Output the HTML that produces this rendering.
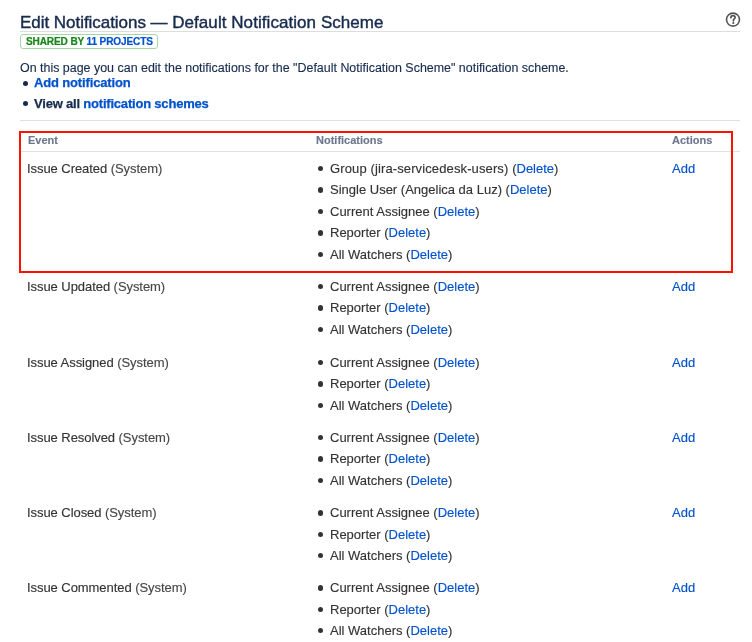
<!DOCTYPE html>
<html><head><meta charset="utf-8"><style>
html,body{margin:0;padding:0;background:#fff;width:752px;height:642px;overflow:hidden;position:relative}
body{font-family:'Liberation Sans', sans-serif}
.t{position:absolute;white-space:nowrap;-webkit-text-stroke:0.14px currentColor;will-change:transform}
.r{position:absolute;box-sizing:content-box}
</style></head><body>
<div class="t" style="left:20.30px;top:14.11px;font-size:17px;line-height:17px;color:#172B4D;-webkit-text-stroke:0.42px #172B4D;"><span style="letter-spacing:-0.04px">Edit Notifications — </span><span style="letter-spacing:0.06px">Default Notification Scheme</span></div>
<div class="r" style="left:20px;top:31px;width:720px;height:1px;background:#dddddd;"></div>
<svg class="r" style="left:724px;top:11px" width="18" height="18" viewBox="0 0 18 18"><circle cx="9" cy="8.6" r="6.5" fill="none" stroke="#555" stroke-width="1.6"/><path d="M6.9 6.7 C6.9 5.4 7.9 4.7 9 4.7 C10.2 4.7 11.1 5.5 11.1 6.5 C11.1 7.8 9.4 8 9.4 9.3 L9.4 9.8" fill="none" stroke="#555" stroke-width="1.7" stroke-linecap="round"/><circle cx="9.3" cy="12.0" r="1.1" fill="#555"/></svg>
<div class="r" style="left:20px;top:34px;width:136px;height:13px;border:1px solid #a9d5a9;border-radius:3px"></div>
<div class="t" style="left:25.50px;top:36.85px;font-size:10.1px;line-height:10.1px;color:#0052CC;font-weight:bold;letter-spacing:-0.15px;-webkit-text-stroke:0.2px currentColor;"><span style="color:#188518">SHARED BY</span> 11 PROJECTS</div>
<div class="t" style="left:19.60px;top:61.66px;font-size:12.45px;line-height:12.45px;color:#172B4D;">On this page you can edit the notifications for the "Default Notification Scheme" notification scheme.</div>
<div class="r" style="left:22.90px;top:81.00px;width:5px;height:5px;border-radius:50%;background:#172B4D"></div>
<div class="t" style="left:34.00px;top:75.70px;font-size:13px;line-height:13px;color:#0052CC;font-weight:bold;letter-spacing:-0.15px;-webkit-text-stroke:0.25px currentColor;">Add notification</div>
<div class="r" style="left:22.90px;top:101.00px;width:5px;height:5px;border-radius:50%;background:#172B4D"></div>
<div class="t" style="left:34.00px;top:97.00px;font-size:13px;line-height:13px;color:#172B4D;font-weight:bold;letter-spacing:-0.2px;-webkit-text-stroke:0.25px currentColor;">View all <span style="color:#0052CC">notification schemes</span></div>
<div class="r" style="left:20px;top:120px;width:720px;height:1px;background:#dfe1e6;"></div>
<div class="t" style="left:27.50px;top:134.89px;font-size:11px;line-height:11px;color:#6B778C;font-weight:bold;">Event</div>
<div class="t" style="left:315.50px;top:134.89px;font-size:11px;line-height:11px;color:#6B778C;font-weight:bold;">Notifications</div>
<div class="t" style="left:671.50px;top:134.89px;font-size:11px;line-height:11px;color:#6B778C;font-weight:bold;">Actions</div>
<div class="r" style="left:20px;top:151px;width:720px;height:1px;background:#dfe1e6;"></div>
<div class="t" style="left:27.00px;top:162.00px;font-size:13px;line-height:13px;color:#333333;letter-spacing:-0.06px;">Issue Created <span style="color:#474747">(System)</span></div>
<div class="t" style="left:671.50px;top:162.00px;font-size:13px;line-height:13px;color:#0052CC;">Add</div>
<div class="r" style="left:317.90px;top:166.00px;width:5.4px;height:5.4px;border-radius:50%;background:#333333"></div>
<div class="t" style="left:330.00px;top:162.00px;font-size:13px;line-height:13px;color:#333333;"><span style="letter-spacing:0.12px">Group (jira-servicedesk-users) </span>(<span style="color:#0052CC">Delete</span>)</div>
<div class="r" style="left:317.90px;top:187.43px;width:5.4px;height:5.4px;border-radius:50%;background:#333333"></div>
<div class="t" style="left:330.00px;top:183.43px;font-size:13px;line-height:13px;color:#333333;">Single User (Angelica da Luz) (<span style="color:#0052CC">Delete</span>)</div>
<div class="r" style="left:317.90px;top:208.86px;width:5.4px;height:5.4px;border-radius:50%;background:#333333"></div>
<div class="t" style="left:330.00px;top:204.86px;font-size:13px;line-height:13px;color:#333333;">Current Assignee (<span style="color:#0052CC">Delete</span>)</div>
<div class="r" style="left:317.90px;top:230.29px;width:5.4px;height:5.4px;border-radius:50%;background:#333333"></div>
<div class="t" style="left:330.00px;top:226.29px;font-size:13px;line-height:13px;color:#333333;">Reporter (<span style="color:#0052CC">Delete</span>)</div>
<div class="r" style="left:317.90px;top:251.72px;width:5.4px;height:5.4px;border-radius:50%;background:#333333"></div>
<div class="t" style="left:330.00px;top:247.72px;font-size:13px;line-height:13px;color:#333333;">All Watchers (<span style="color:#0052CC">Delete</span>)</div>
<div class="t" style="left:27.00px;top:280.00px;font-size:13px;line-height:13px;color:#333333;letter-spacing:-0.06px;">Issue Updated <span style="color:#474747">(System)</span></div>
<div class="t" style="left:671.50px;top:280.00px;font-size:13px;line-height:13px;color:#0052CC;">Add</div>
<div class="r" style="left:317.90px;top:284.00px;width:5.4px;height:5.4px;border-radius:50%;background:#333333"></div>
<div class="t" style="left:330.00px;top:280.00px;font-size:13px;line-height:13px;color:#333333;">Current Assignee (<span style="color:#0052CC">Delete</span>)</div>
<div class="r" style="left:317.90px;top:305.43px;width:5.4px;height:5.4px;border-radius:50%;background:#333333"></div>
<div class="t" style="left:330.00px;top:301.43px;font-size:13px;line-height:13px;color:#333333;">Reporter (<span style="color:#0052CC">Delete</span>)</div>
<div class="r" style="left:317.90px;top:326.86px;width:5.4px;height:5.4px;border-radius:50%;background:#333333"></div>
<div class="t" style="left:330.00px;top:322.86px;font-size:13px;line-height:13px;color:#333333;">All Watchers (<span style="color:#0052CC">Delete</span>)</div>
<div class="t" style="left:27.00px;top:356.00px;font-size:13px;line-height:13px;color:#333333;letter-spacing:-0.06px;">Issue Assigned <span style="color:#474747">(System)</span></div>
<div class="t" style="left:671.50px;top:356.00px;font-size:13px;line-height:13px;color:#0052CC;">Add</div>
<div class="r" style="left:317.90px;top:360.00px;width:5.4px;height:5.4px;border-radius:50%;background:#333333"></div>
<div class="t" style="left:330.00px;top:356.00px;font-size:13px;line-height:13px;color:#333333;">Current Assignee (<span style="color:#0052CC">Delete</span>)</div>
<div class="r" style="left:317.90px;top:381.43px;width:5.4px;height:5.4px;border-radius:50%;background:#333333"></div>
<div class="t" style="left:330.00px;top:377.43px;font-size:13px;line-height:13px;color:#333333;">Reporter (<span style="color:#0052CC">Delete</span>)</div>
<div class="r" style="left:317.90px;top:402.86px;width:5.4px;height:5.4px;border-radius:50%;background:#333333"></div>
<div class="t" style="left:330.00px;top:398.86px;font-size:13px;line-height:13px;color:#333333;">All Watchers (<span style="color:#0052CC">Delete</span>)</div>
<div class="t" style="left:27.00px;top:431.00px;font-size:13px;line-height:13px;color:#333333;letter-spacing:-0.06px;">Issue Resolved <span style="color:#474747">(System)</span></div>
<div class="t" style="left:671.50px;top:431.00px;font-size:13px;line-height:13px;color:#0052CC;">Add</div>
<div class="r" style="left:317.90px;top:435.00px;width:5.4px;height:5.4px;border-radius:50%;background:#333333"></div>
<div class="t" style="left:330.00px;top:431.00px;font-size:13px;line-height:13px;color:#333333;">Current Assignee (<span style="color:#0052CC">Delete</span>)</div>
<div class="r" style="left:317.90px;top:456.43px;width:5.4px;height:5.4px;border-radius:50%;background:#333333"></div>
<div class="t" style="left:330.00px;top:452.43px;font-size:13px;line-height:13px;color:#333333;">Reporter (<span style="color:#0052CC">Delete</span>)</div>
<div class="r" style="left:317.90px;top:477.86px;width:5.4px;height:5.4px;border-radius:50%;background:#333333"></div>
<div class="t" style="left:330.00px;top:473.86px;font-size:13px;line-height:13px;color:#333333;">All Watchers (<span style="color:#0052CC">Delete</span>)</div>
<div class="t" style="left:27.00px;top:506.20px;font-size:13px;line-height:13px;color:#333333;letter-spacing:-0.06px;">Issue Closed <span style="color:#474747">(System)</span></div>
<div class="t" style="left:671.50px;top:506.20px;font-size:13px;line-height:13px;color:#0052CC;">Add</div>
<div class="r" style="left:317.90px;top:510.20px;width:5.4px;height:5.4px;border-radius:50%;background:#333333"></div>
<div class="t" style="left:330.00px;top:506.20px;font-size:13px;line-height:13px;color:#333333;">Current Assignee (<span style="color:#0052CC">Delete</span>)</div>
<div class="r" style="left:317.90px;top:531.63px;width:5.4px;height:5.4px;border-radius:50%;background:#333333"></div>
<div class="t" style="left:330.00px;top:527.63px;font-size:13px;line-height:13px;color:#333333;">Reporter (<span style="color:#0052CC">Delete</span>)</div>
<div class="r" style="left:317.90px;top:553.06px;width:5.4px;height:5.4px;border-radius:50%;background:#333333"></div>
<div class="t" style="left:330.00px;top:549.06px;font-size:13px;line-height:13px;color:#333333;">All Watchers (<span style="color:#0052CC">Delete</span>)</div>
<div class="t" style="left:27.00px;top:581.20px;font-size:13px;line-height:13px;color:#333333;letter-spacing:-0.06px;">Issue Commented <span style="color:#474747">(System)</span></div>
<div class="t" style="left:671.50px;top:581.20px;font-size:13px;line-height:13px;color:#0052CC;">Add</div>
<div class="r" style="left:317.90px;top:585.20px;width:5.4px;height:5.4px;border-radius:50%;background:#333333"></div>
<div class="t" style="left:330.00px;top:581.20px;font-size:13px;line-height:13px;color:#333333;">Current Assignee (<span style="color:#0052CC">Delete</span>)</div>
<div class="r" style="left:317.90px;top:606.63px;width:5.4px;height:5.4px;border-radius:50%;background:#333333"></div>
<div class="t" style="left:330.00px;top:602.63px;font-size:13px;line-height:13px;color:#333333;">Reporter (<span style="color:#0052CC">Delete</span>)</div>
<div class="r" style="left:317.90px;top:628.06px;width:5.4px;height:5.4px;border-radius:50%;background:#333333"></div>
<div class="t" style="left:330.00px;top:624.06px;font-size:13px;line-height:13px;color:#333333;">All Watchers (<span style="color:#0052CC">Delete</span>)</div>
<div class="r" style="left:19px;top:131px;width:710px;height:138px;border:2px solid #fb1400"></div>
</body></html>
